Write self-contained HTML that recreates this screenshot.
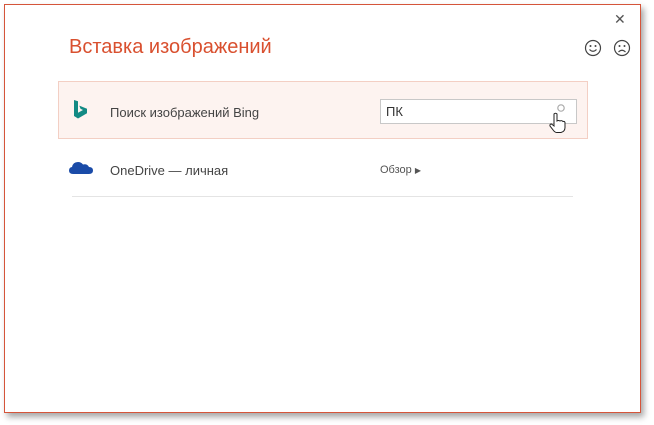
<!DOCTYPE html>
<html><head><meta charset="utf-8"><style>
body{margin:0;width:654px;height:425px;background:#fff;font-family:"Liberation Sans",sans-serif;position:relative;overflow:hidden}
.dlg{position:absolute;left:4px;top:4px;width:635px;height:407px;border:1px solid #d5553a;background:#fff;box-shadow:3px 4px 6px rgba(0,0,0,.35)}
.a{position:absolute}
</style></head><body>
<div class="dlg"></div>
<div class="a" style="left:69px;top:36px;font-size:20px;color:#d9502f">Вставка изображений</div>
<div class="a" style="left:614px;top:11px;font-size:14px;color:#555">✕</div>
<svg class="a" style="left:584px;top:39px" width="50" height="18" viewBox="0 0 50 18">
<g fill="none" stroke="#444" stroke-width="1.2"><circle cx="9" cy="9" r="7.5"/><circle cx="38" cy="9" r="7.5"/>
<path d="M5.5 10.5q3.5 3.5 7 0"/><path d="M34.5 13q3.5-3.5 7 0"/></g>
<g fill="#444"><circle cx="6.5" cy="7" r="1"/><circle cx="11.5" cy="7" r="1"/><circle cx="35.5" cy="7" r="1"/><circle cx="40.5" cy="7" r="1"/></g></svg>
<div class="a" style="left:58px;top:81px;width:528px;height:56px;background:#fdf3f0;border:1px solid #f3cfc4"></div>
<svg class="a" style="left:74px;top:100px" width="14" height="20" viewBox="0 0 14 20"><path d="M0 0l4 1.3v11.5l5-2.8-2.5-1.2-1.2-3.2L13 8.8v4.5L4 18.5 0 16z" fill="#138a84"/></svg>
<div class="a" style="left:110px;top:105px;font-size:13px;color:#444">Поиск изображений Bing</div>
<div class="a" style="left:380px;top:99px;width:195px;height:23px;background:#fff;border:1px solid #c8c8c8"></div>
<div class="a" style="left:386px;top:104px;font-size:13px;color:#333">ПК</div>
<svg class="a" style="left:556px;top:103px" width="10" height="10"><circle cx="5" cy="5" r="3.2" fill="none" stroke="#aaa" stroke-width="1.2"/></svg>
<svg class="a" style="left:549px;top:112px" width="17" height="22" viewBox="0 0 17 22"><path d="M5 2q1.5-1.5 3 0v7q1.5-1 3 0 1.5-1 3 .5 1.5-.5 2 1v5q0 4-4 5H8q-2 0-3.5-2L1 14q-.5-2 1.5-2L5 14z" fill="#fff" stroke="#222" stroke-width="1"/></svg>
<svg class="a" style="left:69px;top:160px" width="24" height="16" viewBox="0 0 24 16"><path d="M4 14q-4 0-4-3.5 0-3 3-3.5 1-5 6-5 3 0 5 2.5 4-1 6 2.5 4 0 4 3.5T20 14z" fill="#1a4ba8"/></svg>
<div class="a" style="left:110px;top:163px;font-size:13px;color:#444">OneDrive — личная</div>
<div class="a" style="left:380px;top:164px;font-size:11px;color:#555">Обзор <span style="font-size:8px">▶</span></div>
<div class="a" style="left:72px;top:196px;width:501px;height:1px;background:#e4e4e4"></div>
</body></html>
